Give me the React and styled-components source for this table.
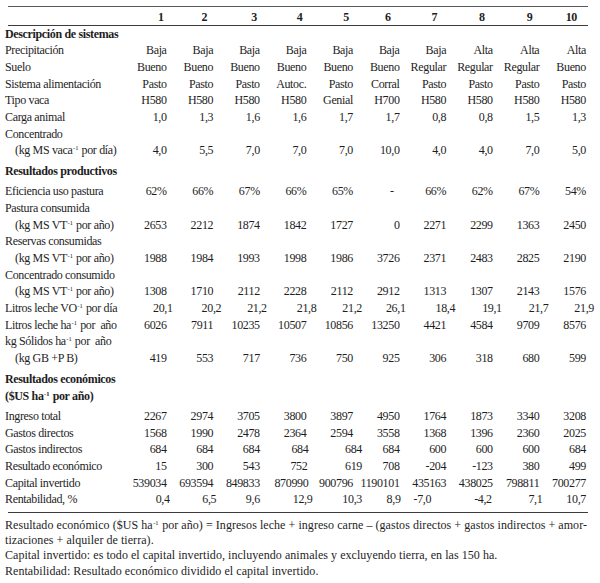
import React from 'react';
import styled, { createGlobalStyle } from 'styled-components';

const Global = createGlobalStyle`
  html, body { margin: 0; padding: 0; background: #ffffff; }
  body {
    font-family: "Liberation Serif", "Times New Roman", serif;
    color: #1e1e1e;
  }
`;

const Page = styled.div`
  width: 600px;
  height: 583px;
  box-sizing: border-box;
  padding: 6px 0 0 5px;
  overflow: hidden;
`;

const Rule = styled.div`
  margin-left: 3px;
  width: 580px;
  border-top: ${p => (p.$thick ? '1.5px solid #3c3c3c' : '1px solid #5a5a5a')};
  margin-top: ${p => p.$gap || 0}px;
`;

const Table = styled.div`
  display: grid;
  grid-template-columns: 117px repeat(10, 46.6px);
  font-size: 12px;
  letter-spacing: -0.35px;
`;

const Label = styled.div`
  line-height: 16.67px;
  padding-left: ${p => (p.$indent ? 10 : 0)}px;
  white-space: nowrap;
`;

const Value = styled.div`
  text-align: right;
  line-height: 16.67px;
  padding-right: 2px;
  margin-right: ${p => -(p.$shift || 0)}px;
  white-space: nowrap;
`;

const HeadCell = styled(Value)`
  font-weight: 700;
  line-height: 16px;
  padding-top: 1.5px;
`;

const Section = styled.div`
  grid-column: 1 / -1;
  font-weight: 700;
  line-height: 16.67px;
  padding: ${p => (p.$first ? '0' : '4.3px 0 3.5px')};
`;

const Sup = styled.sup`
  font-size: 6.5px;
  line-height: 0;
  vertical-align: 4px;
  letter-spacing: 0;
  margin: 0 0.5px;
`;

const Notes = styled.div`
  margin-top: 4.7px;
  width: 582px;
  font-size: 12px;
  line-height: 15.2px;
  letter-spacing: 0.05px;
`;

const NoteLine = styled.div`
  white-space: ${p => (p.$justify ? 'normal' : 'nowrap')};
  text-align: ${p => (p.$justify ? 'justify' : 'left')};
  text-align-last: ${p => (p.$justify ? 'justify' : 'auto')};
`;

const neg = <Sup>-1</Sup>;

const rows = [
  { section: 'Descripción de sistemas', first: true },
  { label: 'Precipitación', values: ['Baja', 'Baja', 'Baja', 'Baja', 'Baja', 'Baja', 'Baja', 'Alta', 'Alta', 'Alta'] },
  { label: 'Suelo', values: ['Bueno', 'Bueno', 'Bueno', 'Bueno', 'Bueno', 'Bueno', 'Regular', 'Regular', 'Regular', 'Bueno'] },
  { label: 'Sistema alimentación', values: ['Pasto', 'Pasto', 'Pasto', 'Autoc.', 'Pasto', 'Corral', 'Pasto', 'Pasto', 'Pasto', 'Pasto'] },
  { label: 'Tipo vaca', values: ['H580', 'H580', 'H580', 'H580', 'Genial', 'H700', 'H580', 'H580', 'H580', 'H580'] },
  { label: 'Carga animal', values: ['1,0', '1,3', '1,6', '1,6', '1,7', '1,7', '0,8', '0,8', '1,5', '1,3'] },
  { label: 'Concentrado' },
  { label: <>(kg MS vaca{neg} por día)</>, indent: true, values: ['4,0', '5,5', '7,0', '7,0', '7,0', '10,0', '4,0', '4,0', '7,0', '5,0'] },
  { section: 'Resultados productivos' },
  { label: 'Eficiencia uso pastura', values: ['62%', '66%', '67%', '66%', '65%', '-', '66%', '62%', '67%', '54%'], shifts: [0, 0, 0, 0, 0, -6, 0, 0, 0, 0] },
  { label: 'Pastura consumida' },
  { label: <>(kg MS VT{neg} por año)</>, indent: true, values: ['2653', '2212', '1874', '1842', '1727', '0', '2271', '2299', '1363', '2450'] },
  { label: 'Reservas consumidas' },
  { label: <>(kg MS VT{neg} por año)</>, indent: true, values: ['1988', '1984', '1993', '1998', '1986', '3726', '2371', '2483', '2825', '2190'] },
  { label: 'Concentrado consumido' },
  { label: <>(kg MS VT{neg} por año)</>, indent: true, values: ['1308', '1710', '2112', '2228', '2112', '2912', '1313', '1307', '2143', '1576'] },
  { label: <>Litros leche VO{neg} por día</>, values: ['20,1', '20,2', '21,2', '21,8', '21,2', '26,1', '18,4', '19,1', '21,7', '21,9'], shifts: [6, 8, 7, 10, 9, 6, 9, 9, 9, 8] },
  { label: <>Litros leche ha{neg} por&nbsp; año</>, values: ['6026', '7911', '10235', '10507', '10856', '13250', '4421', '4584', '9709', '8576'] },
  { label: <>kg Sólidos ha{neg} por&nbsp; año</> },
  { label: '(kg GB +P B)', indent: true, values: ['419', '553', '717', '736', '750', '925', '306', '318', '680', '599'] },
  { section: <>Resultados económicos<br />($US ha{neg} por año)</> },
  { label: 'Ingreso total', values: ['2267', '2974', '3705', '3800', '3897', '4950', '1764', '1873', '3340', '3208'] },
  { label: 'Gastos directos', values: ['1568', '1990', '2478', '2364', '2594', '3558', '1368', '1396', '2360', '2025'] },
  { label: 'Gastos indirectos', values: ['684', '684', '684', '684', '684', '684', '600', '600', '600', '684'], shifts: [0, 0, 0, 2, 9, 0, 0, 0, 0, 0] },
  { label: 'Resultado económico', values: ['15', '300', '543', '752', '619', '708', '-204', '-123', '380', '499'], shifts: [0, 0, 0, 1, 9, 0, 0, 0, 0, 0] },
  { label: 'Capital invertido', values: ['539034', '693594', '849833', '870990', '900796', '1190101', '435163', '438025', '798811', '700277'], shifts: [0, 0, 0, 2, 0, 0, 0, 0, 0, 0] },
  { label: 'Rentabilidad, %', values: ['0,4', '6,5', '9,6', '12,9', '10,3', '8,9', '-7,0', '-4,2', '7,1', '10,7'], shifts: [3, 3, 0, 6, 9, 1, -15, -1, 3, 0] },
];

const headShifts = [-3, -6, -3, -4, -4, -9, -9, -8, -7, -9];

function Row({ row }) {
  if (row.section) {
    return <Section $first={row.first}>{row.section}</Section>;
  }
  const values = row.values || Array(10).fill('');
  return (
    <>
      <Label $indent={row.indent}>{row.label}</Label>
      {values.map((v, i) => (
        <Value key={i} $shift={row.shifts ? row.shifts[i] : 0}>{v}</Value>
      ))}
    </>
  );
}

export default function App() {
  return (
    <>
      <Global />
      <Page>
        <Rule />
        <Table>
          <Label />
          {headShifts.map((s, i) => (
            <HeadCell key={i} $shift={s}>{i + 1}</HeadCell>
          ))}
        </Table>
        <Rule $thick />
        <Table>
          {rows.map((r, i) => (
            <Row key={i} row={r} />
          ))}
        </Table>
        <Rule $thick $gap={4.3} />
        <Notes>
          <NoteLine $justify>
            Resultado económico ($US ha{neg} por año) = Ingresos leche + ingreso carne – (gastos directos + gastos indirectos + amor-
          </NoteLine>
          <NoteLine>tizaciones + alquiler de tierra).</NoteLine>
          <NoteLine>Capital invertido: es todo el capital invertido, incluyendo animales y excluyendo tierra, en las 150 ha.</NoteLine>
          <NoteLine>Rentabilidad: Resultado económico dividido el capital invertido.</NoteLine>
        </Notes>
      </Page>
    </>
  );
}
